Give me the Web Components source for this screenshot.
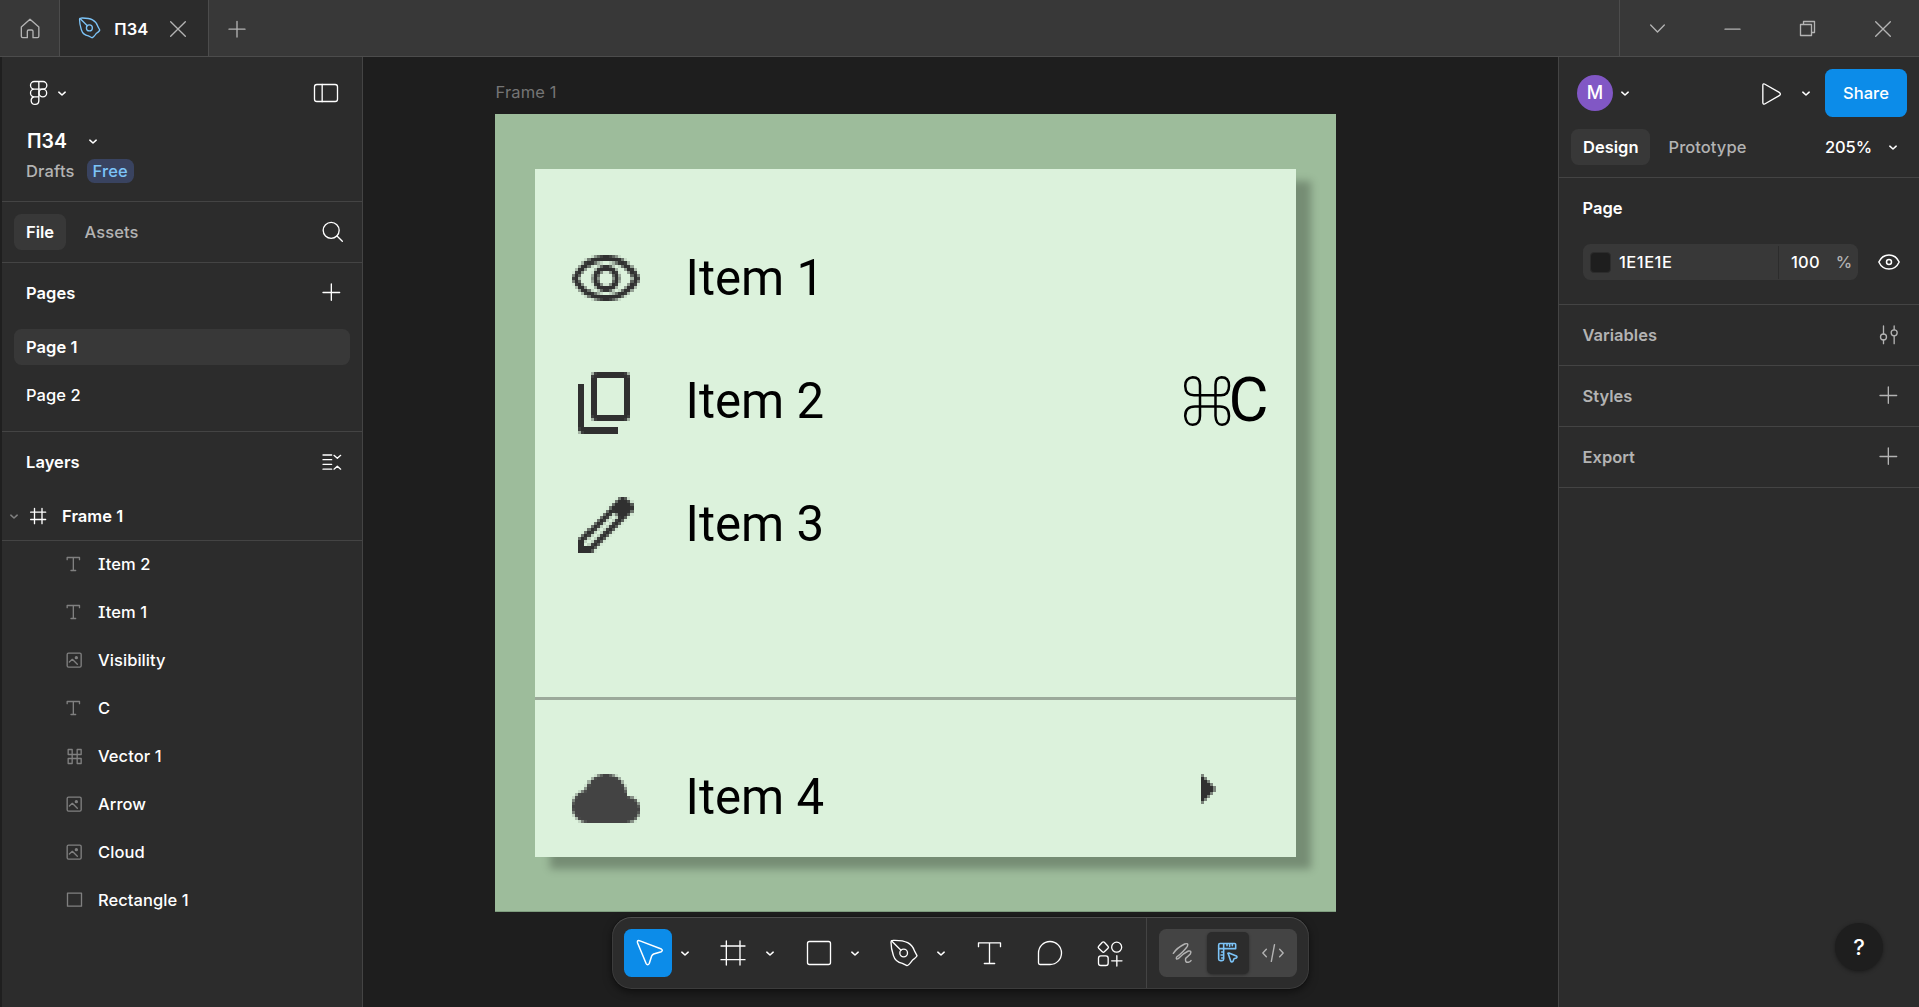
<!DOCTYPE html>
<html lang="en">
<head>
<meta charset="utf-8">
<title>П34</title>
<style>
html,body{margin:0;height:100%;overflow:hidden;background:#1e1e1e}
body{font-family:Inter,"Liberation Sans",sans-serif;font-size:16.5px;line-height:24px;letter-spacing:.06px;color:#fff;font-weight:450}
</style>
</head>
<body>
<fig-app></fig-app>
<script>
/* Icon geometry: [viewBox, markup]. Three units make one CSS pixel. */
const PEN='<path d="M878 91Q908 90 923 98Q938 106 943 122L951 137Q950 141 937 151Q926 166 921 167L907 160Q886 156 880 136Q873 115 873 96Q873 91 878 91Z"/><circle cx="911" cy="129" r="11.5"/><path d="M875 93L903 121"/>';
const IMG='<rect x="201.500" y="459.500" width="42" height="42" rx="4"/><path d="M208 486L217 478L232 493"/><circle cx="229" cy="473" r="3" fill="currentColor"/>';
const ICONS={
 home:['60 54 60 63','<path d="M64 81L90 57.500L116.500 81V109q0 4-4 4H99V94q0-4-4-4H86q-4 0-4 4V113H68q-4 0-4-4Z"/>'],
 penTab:['871 87 82 84',PEN,21.3,21.8,5],
 pen:['870 87 84 84',PEN],
 x:['510 63 48 48','<path d="M512 65L556 109M556 65L512 109"/>'],
 plusTab:['687 63 48 48','<path d="M687 87.500H735M711 64V111"/>'],
 down:['300 72 45 30','<path d="M302 75L322.500 96L343 75"/>'],
 min:['525 84 45 6','<path d="M525 87.500H570"/>'],
 restore:['750 63 45 45','<path d="M751.500 73.500H784.500V106.500H751.500ZM760.500 73V64.500H793.500V97.500H785"/>'],
 chev:['241 123 24 15','<path d="M243.500 126.500L253 135L262.500 126.500"/>',8,5,4.6],
 figma:['87 240 57 78','<path d="M116.500 244.500H103a11.500 11.500 0 0 0 0 23h13.500ZM116.500 244.500H129a11.500 11.500 0 0 1 0 23H116.500M116.500 267.500H103a11.500 11.500 0 0 0 0 23h13.500ZM116.500 290.500H103a11.500 11.500 0 1 0 13.500 11.500Z"/><circle cx="128.500" cy="279" r="11.500"/>'],
 sidebar:['942 252 72 54','<rect x="943.500" y="253.500" width="69" height="51" rx="7"/><path d="M966.500 253V305"/>'],
 search:['966 666 63 63','<circle cx="993.500" cy="694" r="24"/><path d="M1011 711L1027 727"/>'],
 plus:['969 57 51 51','<path d="M969 82.500H1019M994 57V106"/>'],
 collapse:['969 567 54 48','<path d="M969 570H995M969 584H995M969 598H995M969 612.500H995M1002 571L1012 580L1022 571M1002 612.500L1012 603.500L1022 612.500"/>'],
 hash:['90 729 48 48','<path d="M92 741.500H137M92 763.500H137M103.500 730V776M126 730V776"/>'],
 text:['198 165 48 48','<path d="M201.500 176V169.500H238.500V176M220 169.500V208.500M213 208.500H227"/>'],
 image:['198 456 48 48',IMG],
 vector:['198 744 48 48','<path d="M204.500 748.500h12v15h-12ZM231.500 748.500h12v15h-12ZM204.500 775.500h12v15h-12ZM231.500 775.500h12v15h-12ZM216.500 763.500h15v12h-15Z"/>'],
 rectLayer:['198 1179 48 48','<rect x="202.500" y="1182.500" width="42" height="39"/>'],
 play:['636 243 60 69','<path d="M638.500 253q0-6 5-4L689 275q4 4 0 8L644 309q-5 2-5.500-4Z"/>'],
 eye:['984 222 66 48','<path d="M986.500 246C993 232 1004 225 1017 225S1041 232 1047.500 246C1041 260 1030 267 1017 267S993 260 986.500 246Z"/><circle cx="1017" cy="246" r="7.500"/>',22,16,4.5],
 vars:['987 435 60 60','<circle cx="1000.500" cy="471" r="9"/><circle cx="1032.500" cy="458.500" r="9"/><path d="M1000.500 438V462M1000.500 480V491M1032.500 438V449M1032.500 468V491"/>'],
 move:['102 90 84 84','<path d="M109.500 101Q108 93 115 95L181 120Q187 124 181 128L158 135Q154 137 152 141L145 163Q140 171 135 163Z"/>',28,28,4.5],
 frame:['363 93 72 72','<path d="M363 108H435M363 149H435M379 93V165M420 93V165"/>'],
 rect:['621 93 72 72','<rect x="622.500" y="94.500" width="69" height="69" rx="6"/>'],
 type:['54 96 69 66','<path d="M55.500 110V98.500H121.500V110M88.500 98.500V160M73 160.500H104"/>'],
 comment:['234 93 72 72','<path d="M270 94.500a34.500 34.500 0 0 1 0 69H240q-4.500 0-4.500-4.500V129a34.500 34.500 0 0 1 34.500-34.500Z"/>'],
 parts:['411 90 78 75','<path d="M427 94q3-3 6 0L444 105.500q3 3 0 6L433 122.500q-3 3-6 0L416 111.500q-3-3 0-6Z"/><circle cx="470" cy="108.500" r="15"/><rect x="415.500" y="134.500" width="29" height="29" rx="7"/><path d="M455 149.500H486M470.500 134V165"/>'],
 draw:['636 93 63 66','<path d="M640 127Q650 111 674 99Q687 95 682 106Q672 121 650 138Q646 147 656 142Q671 126 685 120Q696 118 691 129Q684 136 677 142Q674 155 685 154Q690 153 693 149"/>',21,22,4.5],
 design:['777 102 60 60','<path d="M783 103.500H827q3 0 3 3V119H794V150q0 5-5 5H784q-5 0-5-5V108q0-4.500 4-4.500ZM779 119H794V104M804 104V110M812 104V112M820 104V110M794 129H788M794 138H786M794 147H788"/><path d="M808 135Q804 131 810 132L832 141Q836 144 832 147L825 149L822 157Q818 161 815 156Z"/>',20,20,4.8],
 code:['906 102 66 54','<path d="M919 118L908.500 129L919 140M943.500 104L934 154M959 118L969.500 129L959 140"/>',22,18,4.2]
};
const define=(tag,css,html,init)=>customElements.define(tag,class extends HTMLElement{
  connectedCallback(){
    if(this.shadowRoot)return;
    const root=this.attachShadow({mode:'open'});
    root.innerHTML='<style>*{box-sizing:border-box}'+css+'</style>'+(typeof html==='function'?html(this):html);
    if(init)init(this,root);
  }
});

define('fig-icon',':host{display:inline-flex;flex:none}svg{display:block;overflow:visible}',el=>{
  const [vb,body,w,h,sw]=ICONS[el.getAttribute('name')];
  const b=vb.split(' ').map(Number);
  return `<svg width="${w||b[2]/3}" height="${h||b[3]/3}" viewBox="${vb}" fill="none" stroke="currentColor" stroke-width="${sw||4}" stroke-linecap="round" stroke-linejoin="round">${body}</svg>`;
});

/* Low-resolution bitmap of a 24×24 glyph, enlarged to 3.075px cells. */
const BITMAPS={
 visibility:'M12 6c3.790 0 7.170 2.130 8.820 5.500C19.170 14.870 15.790 17 12 17s-7.170-2.130-8.820-5.500C4.830 8.130 8.210 6 12 6m0-2C7 4 2.730 7.110 1 11.500 2.730 15.890 7 19 12 19s9.270-3.110 11-7.500C21.270 7.110 17 4 12 4zm0 5c1.380 0 2.500 1.120 2.500 2.500S13.380 14 12 14s-2.500-1.120-2.500-2.500S10.620 9 12 9m0-2c-2.480 0-4.500 2.020-4.500 4.500S9.520 16 12 16s4.500-2.020 4.500-4.500S14.480 7 12 7z',
 copy:'M9 18q-.825 0-1.412-.587T7 16V4q0-.825.588-1.412T9 2h9q.825 0 1.413.588T20 4v12q0 .825-.587 1.413T18 18zm0-2h9V4H9zm-4 6q-.825 0-1.412-.587T3 20V6h2v14h11v2z',
 edit:'M5 19h1.425L16.200 9.225L14.775 7.800L5 17.575zm-2 2v-4.250L16.200 3.575q.3-.275.663-.425t.762-.15t.775.15t.65.45L20.425 5q.3.275.438.65T21 6.400q0 .4-.137.763t-.438.662L7.250 21z',
 cloud:'M6.500 20q-2.275 0-3.887-1.575T1 14.575q0-1.950 1.175-3.475T5.250 9.150q.625-2.300 2.500-3.725T12 4q2.925 0 4.963 2.038T19 11q1.725.2 2.863 1.488T23 15.500q0 1.875-1.312 3.188T18.500 20z',
 arrow:'M10 17V7l5 5z'
};
define('pixel-glyph',':host{display:block;color:#303030}svg{display:block}',el=>{
  const ctx=document.createElement('canvas').getContext('2d'),p=new Path2D(BITMAPS[el.getAttribute('name')]);
  let out='';
  for(let y=0;y<24;y++)for(let x=0;x<24;x++){
    let n=0;
    for(let i=0;i<8;i++)for(let j=0;j<8;j++)if(ctx.isPointInPath(p,x+(i+.5)/8,y+(j+.5)/8,'evenodd'))n++;
    if(n)out+=`<rect x="${x}" y="${y}" width="1" height="1"${n<64?` fill-opacity="${(n/64).toFixed(2)}"`:''}/>`;
  }
  return `<svg width="73.8" height="73.8" viewBox="0 0 24 24" fill="currentColor" shape-rendering="crispEdges">${out}</svg>`;
});

define('window-bar',`:host{display:flex;height:57px;background:#383838;border-bottom:1px solid #4c4c4c;color:#b3b3b3}
.home{width:60px;border-right:1px solid #4c4c4c;display:flex;align-items:center;padding:0 0 0 20px}
.tab{width:149px;background:#2c2c2c;border-right:1px solid #4c4c4c;display:flex;align-items:center;padding-left:19px;color:#fff;font-weight:600;font-size:16.5px}
.tab .p{color:#7cc4f8}.tab span{margin:2px 0 0 14px;flex:1}.tab .x{color:#b3b3b3;margin:2px 22px 0 0}
.new{display:flex;align-items:center;padding:2px 0 0 20px;flex:1}.ctl{display:grid;grid-template-columns:repeat(4,75px);width:300px;border-left:1px solid #4c4c4c;place-items:center;padding-top:1px}`,
`<div class="home"><fig-icon name="home"></fig-icon></div>
<div class="tab"><fig-icon class="p" name="penTab"></fig-icon><span>П34</span><fig-icon class="x" name="x"></fig-icon></div>
<div class="new"><fig-icon name="plusTab"></fig-icon></div>
<div class="ctl"><fig-icon name="down"></fig-icon><fig-icon name="min"></fig-icon><fig-icon name="restore"></fig-icon><fig-icon name="x"></fig-icon></div>`);

define('pill-tab',`:host{display:flex;align-items:center;height:36px;padding:0 12px;border-radius:7.5px;color:#b3b3b3;font-weight:450}
:host([active]){background:#383838;color:#fff;font-weight:600;letter-spacing:0}`,'<slot></slot>');

define('layer-row',`:host{display:flex;align-items:center;height:48px;padding-left:64px;font-feature-settings:"cv08" 1}
fig-icon{color:#808080;margin-right:16px}`,el=>`<fig-icon name="${el.getAttribute('icon')}"></fig-icon><slot></slot>`);

define('left-panel',`:host{display:flex;flex-direction:column;width:363px;background:#2c2c2c;border-right:1px solid #444;border-left:2px solid #1f1f1f}
.row{display:flex;align-items:center;justify-content:space-between}
.head{height:145px;border-bottom:1px solid #444;padding:22px 24px 0 27px}
.logo{display:flex;align-items:center;gap:10px}.head .row{height:28px}
.title{display:flex;align-items:center;height:30px;margin:19px 0 0 -2px;font-size:19.5px;font-weight:600}
.title fig-icon{margin-left:22px}
.sub{display:flex;align-items:center;height:24px;margin:3px 0 0 -3px;color:#b3b3b3;letter-spacing:.16px}
.badge{height:24px;padding:0 6px;margin-left:12px;border-radius:7.5px;background:#394360;color:#7cc4f8;line-height:24px}
.tabs{height:61px;border-bottom:1px solid #444;padding:0 19px 1px 12px}.tabs div{display:flex;gap:6.5px}
.sec{height:60px;padding:0 21px 0 24px;font-weight:600}.pages .sec{padding-right:22px}.pages .sec fig-icon{margin-top:-1px}
.pages{height:169px;border-bottom:1px solid #444}
.page{height:36px;margin:6px 12px 0;padding:0 12px;line-height:36px;border-radius:7.5px}
.page.on{background:#383838;font-weight:600}.page+.page{margin-top:12px}
.frame{display:flex;align-items:center;height:49px;padding-left:8px;font-weight:600;border-bottom:1.5px solid #444}
.frame .c{color:#808080;margin-right:12px}.frame .h{margin-right:16px}.list{margin-top:-1px}`,
`<div class="head"><div class="row"><div class="logo"><fig-icon name="figma"></fig-icon><fig-icon name="chev"></fig-icon></div><fig-icon name="sidebar"></fig-icon></div>
<div class="title">П34<fig-icon name="chev"></fig-icon></div><div class="sub">Drafts<span class="badge">Free</span></div></div>
<div class="tabs row"><div><pill-tab active>File</pill-tab><pill-tab>Assets</pill-tab></div><fig-icon name="search"></fig-icon></div>
<div class="pages"><div class="sec row">Pages<fig-icon name="plus"></fig-icon></div><div class="page on">Page 1</div><div class="page">Page 2</div></div>
<div class="sec row">Layers<fig-icon name="collapse"></fig-icon></div>
<div class="frame"><fig-icon class="c" name="chev"></fig-icon><fig-icon class="h" name="hash"></fig-icon>Frame 1</div>
<div class="list"><layer-row icon="text">Item 2</layer-row><layer-row icon="text">Item 1</layer-row><layer-row icon="image">Visibility</layer-row><layer-row icon="text">C</layer-row><layer-row icon="vector">Vector 1</layer-row><layer-row icon="image">Arrow</layer-row><layer-row icon="image">Cloud</layer-row><layer-row icon="rectLayer">Rectangle 1</layer-row></div>`);

/* A node on the free canvas: placed by its own x / y. */
define('canvas-node',':host{position:absolute;display:block;white-space:nowrap}','<slot></slot>',el=>{
  el.style.left=el.getAttribute('x')+'px';el.style.top=el.getAttribute('y')+'px';
});
define('design-canvas',`:host{position:relative;display:block;flex:1;background:#1e1e1e;overflow:hidden}
.lab{color:#757575;font-size:16.5px;font-weight:400;letter-spacing:.15px}
.art{width:841px;height:798px;background:#9dbc9b;border-bottom:1px solid #7f9d7f}
.card{width:761px;height:687.5px;background:#dcf2dc;box-shadow:15px 12px 8px rgba(0,0,0,.25)}
.rule{width:761px;height:3px;background:#9caa9b}
.t{font:400 49.2px/58px Roboto;color:#000;letter-spacing:0}.c{font-size:61.5px;line-height:72px}
.cloud{color:#434343}svg{display:block}`,
`<canvas-node class="lab" x="132.500" y="23">Frame 1</canvas-node>
<canvas-node x="132" y="57"><div class="art"></div></canvas-node>
<canvas-node x="172" y="112"><div class="card"></div></canvas-node>
<canvas-node x="172" y="640"><div class="rule"></div></canvas-node>
<canvas-node x="205.9" y="185.700"><pixel-glyph name="visibility"></pixel-glyph></canvas-node>
<canvas-node x="205.9" y="308.500"><pixel-glyph name="copy"></pixel-glyph></canvas-node>
<canvas-node x="205.9" y="431"><pixel-glyph name="edit"></pixel-glyph></canvas-node>
<canvas-node x="205.9" y="704.600"><pixel-glyph class="cloud" name="cloud"></pixel-glyph></canvas-node>
<canvas-node x="807.3" y="694.600"><pixel-glyph name="arrow"></pixel-glyph></canvas-node>
<canvas-node class="t" x="322.500" y="192">Item 1</canvas-node><canvas-node class="t" x="322.500" y="315">Item 2</canvas-node><canvas-node class="t" x="322.500" y="438">Item 3</canvas-node><canvas-node class="t" x="322.500" y="711">Item 4</canvas-node>
<canvas-node x="820" y="317.500"><svg width="50" height="52" viewBox="0 0 50 52" fill="none" stroke="#000" stroke-width="2.500"><path d="M17 20.500V10Q17 2.300 9.700 2.300Q2.200 3 2.200 11Q2.500 20.300 11 20.300H38Q46 20 46 11Q46 2.300 38.500 2.300Q32.500 2.500 32.500 10V41Q33 49.800 39 49.800Q46 49.500 46 41Q46 31.500 37 31.500H12Q2.200 31.500 2.200 41Q3 49.800 9.700 49.800Q17 49.500 17 41Z"/></svg></canvas-node>
<canvas-node class="t c" x="865.500" y="307">C</canvas-node>`);

define('prop-section',`:host{display:flex;align-items:center;justify-content:space-between;height:61px;border-bottom:1px solid #444;padding:0 22px 0 23.5px;color:#b3b3b3;font-weight:570;letter-spacing:0}
:host([icon=vars]){padding-right:20px}fig-icon{margin-top:-1px}`,el=>`<slot></slot><fig-icon name="${el.getAttribute('icon')}"></fig-icon>`);
define('right-panel',`:host{display:flex;flex-direction:column;width:361px;background:#2c2c2c;border-left:1px solid #444}
.top{height:121px;border-bottom:1px solid #444;padding-top:12px}.r{display:flex;align-items:center}
.a{height:48px;padding:0 12px 0 18px}.av{width:36px;height:36px;border-radius:50%;background:#8157c5;text-align:center;line-height:36px;font-size:18px;font-weight:450;margin-right:8px}
.sp{flex:1}.share{width:82px;height:48px;line-height:48px;border-radius:7.5px;background:#0c8ce9;text-align:center;font-weight:550;margin-left:15px}
.play{margin-right:20px}.b{height:36px;margin-top:12px;padding:0 22px 0 12px}.b span{margin:0 17px 0 auto;letter-spacing:-.1px}.b pill-tab+pill-tab{margin-left:6px}
.page{height:127px;border-bottom:1px solid #444;padding:18px 19px 0 23.5px;font-weight:570;letter-spacing:0}
.f{margin-top:24px;font-weight:450}.field{display:flex;width:276.5px;height:36px;background:#383838;border-radius:7.5px;align-items:center;margin-right:20px}
.sw{width:21px;height:21px;margin:0 8px 0 7.5px;border-radius:4px;background:#1e1e1e;border:1px solid #2c2c2c}.hex{width:159px;letter-spacing:.5px}
.op{display:flex;flex:1;height:33px;border-left:1px solid #2c2c2c;align-items:center;padding-left:12px;letter-spacing:.2px}.op i{font-style:normal;color:#b3b3b3;margin-left:16px;letter-spacing:-1px}`,
`<div class="top"><div class="r a"><div class="av">M</div><fig-icon name="chev"></fig-icon><div class="sp"></div><fig-icon class="play" name="play"></fig-icon><fig-icon name="chev"></fig-icon><div class="share">Share</div></div>
<div class="r b"><pill-tab active>Design</pill-tab><pill-tab>Prototype</pill-tab><span>205%</span><fig-icon name="chev"></fig-icon></div></div>
<div class="page"><div>Page</div><div class="r f"><div class="field"><div class="sw"></div><div class="hex">1E1E1E</div><div class="op">100<i>%</i></div></div><fig-icon name="eye"></fig-icon></div></div>
<prop-section icon="vars">Variables</prop-section><prop-section icon="plus">Styles</prop-section><prop-section icon="plus">Export</prop-section>`);

define('tool-button',`:host{display:flex;height:48px}.i{display:flex;width:48px;align-items:center;justify-content:center;border-radius:7.5px}
:host([active]) .i{background:#0c8ce9}:host([active]) .i fig-icon{margin-left:1px}.m{display:flex;width:25.3px;align-items:center;justify-content:center;padding-top:1px}`,
el=>`<div class="i"><fig-icon name="${el.getAttribute('icon')}"></fig-icon></div>${el.hasAttribute('menu')?'<div class="m"><fig-icon name="chev"></fig-icon></div>':''}`);
define('tool-bar',`:host{position:absolute;left:612px;top:917px;width:697px;height:72px;display:flex;align-items:center;gap:12px;padding:0 12px;border-radius:19.5px;background:#2c2c2c;box-shadow:inset 0 0 0 1px rgba(255,255,255,.08),inset 0 1px 0 rgba(255,255,255,.1),0 3px 8px rgba(0,0,0,.5),0 0 1px #000}
tool-button[icon=comment]{margin-left:.8px}.line{width:1px;height:70px;background:#444}.seg{display:flex;gap:3px;padding:3px;width:138px;height:48px;border-radius:7.5px;background:#444;color:#b3b3b3}
.seg div{width:42px;height:42px;display:flex;align-items:center;justify-content:center;border-radius:5px}.seg .on{background:#2c2c2c;color:#7cc4f8;box-shadow:0 1px 3px rgba(0,0,0,.35)}`,
`<tool-button active menu icon="move"></tool-button><tool-button menu icon="frame"></tool-button><tool-button menu icon="rect"></tool-button><tool-button menu icon="pen"></tool-button><tool-button icon="type"></tool-button><tool-button icon="comment"></tool-button><tool-button icon="parts"></tool-button><div class="line"></div>
<div class="seg"><div><fig-icon name="draw"></fig-icon></div><div class="on"><fig-icon name="design"></fig-icon></div><div><fig-icon name="code"></fig-icon></div></div>`);
define('help-button',':host{position:absolute;left:1835px;top:923px;width:48px;height:48px;border-radius:50%;background:#1e1e1e;box-shadow:0 1px 4px rgba(0,0,0,.4);text-align:center;font-size:22px;font-weight:500;line-height:49px}','?');
define('fig-app',':host{position:relative;display:flex;flex-direction:column;height:1007px;width:1919px}main{display:flex;flex:1;min-height:0}',
'<window-bar></window-bar><main><left-panel></left-panel><design-canvas></design-canvas><right-panel></right-panel></main><tool-bar></tool-bar><help-button></help-button>');
</script>
</body>
</html>
